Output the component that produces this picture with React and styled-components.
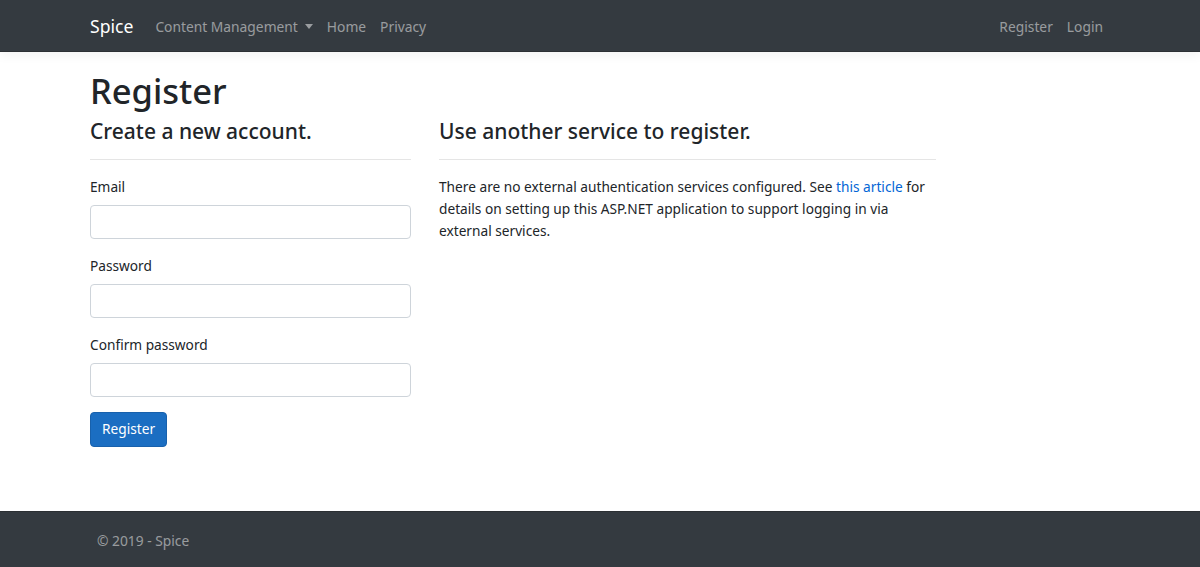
import React from "react";
import styled, { createGlobalStyle } from "styled-components";

const GlobalStyle = createGlobalStyle`
  html, body { margin: 0; padding: 0; }
  body {
    font-family: "Noto Sans", "Open Sans", sans-serif;
    font-size: 13.7px;
    line-height: 1.5;
    color: #212529;
    background: #fff;
  }
  * { box-sizing: border-box; }
`;

const Page = styled.div`
  min-height: 571px;
  display: flex;
  flex-direction: column;
`;

const Navbar = styled.nav`
  height: 52px;
  background: #343a40;
  border-bottom: 1px solid #2b2f33;
  box-shadow: 0 4px 10px rgba(0, 0, 0, 0.05);
  display: flex;
  align-items: center;
`;

const NavInner = styled.div`
  width: 1020px;
  margin-left: 90px;
  padding-top: 3px;
  display: flex;
  align-items: center;
`;

const Brand = styled.a`
  color: #fff;
  font-size: 17.6px;
  margin-right: 15px;
  text-decoration: none;
  padding-bottom: 1px;
`;

const NavLinks = styled.div`
  display: flex;
  align-items: center;
  margin-left: ${(p) => (p.$right ? "auto" : "0")};
`;

const NavLink = styled.a`
  color: rgba(255, 255, 255, 0.5);
  padding: 7px;
  text-decoration: none;
  display: flex;
  align-items: center;
  font-size: 13.8px;
`;

const Caret = styled.span`
  display: inline-block;
  margin-left: 7px;
  border-top: 5px solid currentColor;
  border-left: 4px solid transparent;
  border-right: 4px solid transparent;
  margin-top: -2px;
`;

const Main = styled.main`
  flex: 1;
  width: 1053px;
  margin-left: 90px;
  padding-top: 18px;
`;

const Title = styled.h1`
  font-size: 34.5px;
  font-weight: 500;
  line-height: 1.2;
  margin: 0 0 8px;
`;

const Row = styled.div`
  display: flex;
  gap: 28px;
`;

const Col = styled.section`
  width: ${(p) => p.$w}px;
  flex: none;
`;

const SubTitle = styled.h4`
  font-size: 21px;
  font-weight: 500;
  line-height: 1.2;
  margin: 0;
`;

const Rule = styled.hr`
  border: 0;
  border-top: 1px solid rgba(0, 0, 0, 0.1);
  margin: 14px 0 16px;
`;

const Group = styled.div`
  margin-bottom: 16px;
`;

const Label = styled.label`
  display: block;
  line-height: 21px;
  margin-bottom: 8px;
`;

const Input = styled.input`
  display: block;
  width: 100%;
  height: 34px;
  padding: 5px 10px;
  font: inherit;
  border: 1px solid #ced4da;
  border-radius: 4px;
  background: #fff;
`;

const Button = styled.button`
  font: inherit;
  color: #fff;
  background: #1b6ec2;
  border: 1px solid #1861ac;
  border-radius: 4px;
  padding: 5px 11px;
  height: 35px;
  margin-top: -1px;
`;

const Text = styled.p`
  margin: 0;
  line-height: 22px;
`;

const Link = styled.a`
  color: #0366d6;
  text-decoration: none;
`;

const Footer = styled.footer`
  height: 60px;
  line-height: 58px;
  background: #343a40;
  border-top: 1px solid #2b2f33;
  color: rgba(255, 255, 255, 0.5);
  padding-left: 97px;
  font-size: 13.8px;
`;

export default function App() {
  return (
    <>
      <GlobalStyle />
      <Page>
        <Navbar>
          <NavInner>
            <Brand href="#">Spice</Brand>
            <NavLinks>
              <NavLink href="#">
                Content Management<Caret />
              </NavLink>
              <NavLink href="#">Home</NavLink>
              <NavLink href="#">Privacy</NavLink>
            </NavLinks>
            <NavLinks $right>
              <NavLink href="#">Register</NavLink>
              <NavLink href="#">Login</NavLink>
            </NavLinks>
          </NavInner>
        </Navbar>
        <Main>
          <Title>Register</Title>
          <Row>
            <Col $w={321}>
              <SubTitle>Create a new account.</SubTitle>
              <Rule />
              <Group>
                <Label>Email</Label>
                <Input type="email" />
              </Group>
              <Group>
                <Label>Password</Label>
                <Input type="password" />
              </Group>
              <Group>
                <Label>Confirm password</Label>
                <Input type="password" />
              </Group>
              <Button>Register</Button>
            </Col>
            <Col $w={497}>
              <SubTitle>Use another service to register.</SubTitle>
              <Rule />
              <Text>
                There are no external authentication services configured. See{" "}
                <Link href="#">this article</Link> for details on setting up this
                ASP.NET application to support logging in via external services.
              </Text>
            </Col>
          </Row>
        </Main>
        <Footer>© 2019 - Spice</Footer>
      </Page>
    </>
  );
}
